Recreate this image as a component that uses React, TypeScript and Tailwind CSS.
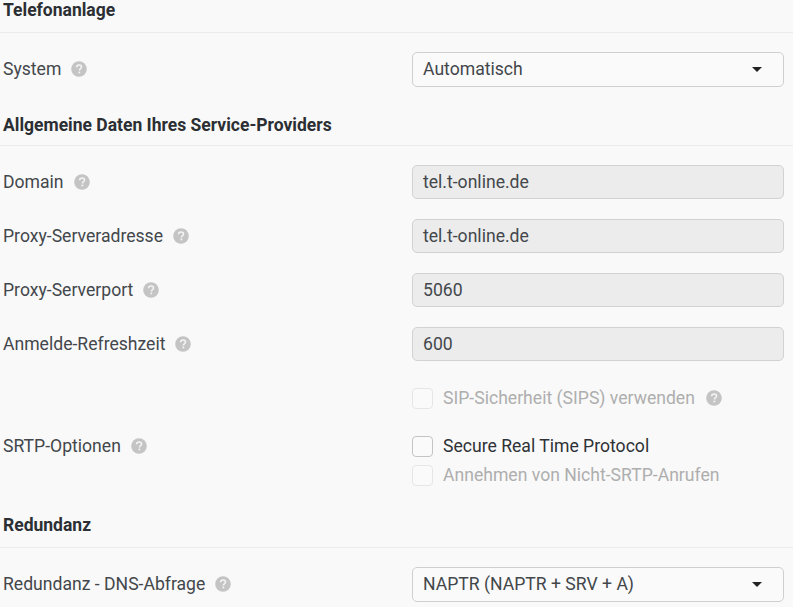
import React from "react";

function Help({ className = "" }: { className?: string }) {
  return (
    <svg viewBox="0 0 16 16" className={`w-4 h-4 shrink-0 ${className}`} aria-hidden="true">
      <circle cx="8" cy="8" r="7.8" fill="#c4c4c4" />
      <path d="M5.6 6.2c.1-1.4 1.1-2.2 2.5-2.2 1.4 0 2.4.8 2.4 2 0 .9-.5 1.4-1.2 1.9-.6.4-.8.7-.8 1.3v.2" fill="none" stroke="#f5f5f5" strokeWidth="1.6" />
      <rect x="7.5" y="10.6" width="1.7" height="1.7" fill="#f5f5f5" />
    </svg>
  );
}

function Heading({ children, className }: { children: React.ReactNode; className: string }) {
  return (
    <div className={`${className} flex items-end pl-[3px] border-b border-[#ececec] font-bold text-[17.5px] leading-5 text-[#2b2f33]`}>
      {children}
    </div>
  );
}

function Label({ text }: { text: string }) {
  return (
    <div className="w-[412px] shrink-0 pl-[3px] flex items-center gap-[10px] h-6">
      <span>{text}</span>
      <Help />
    </div>
  );
}

function Select({ value }: { value: string }) {
  return (
    <div className="w-[372px] h-[35px] flex items-center justify-between pl-[10px] pr-[21px] pb-[1px] bg-[#fafafa] border border-[#cfcfcf] rounded-[5px]">
      <span>{value}</span>
      <span className="w-0 h-0 border-x-[5px] border-x-transparent border-t-[5px] border-t-[#222]" />
    </div>
  );
}

function Field({ label, value }: { label: string; value: string }) {
  return (
    <div className="flex items-center h-[34px] mb-5">
      <Label text={label} />
      <div className="w-[372px] h-[34px] flex items-center pl-[10px] bg-[#ececec] border border-[#d2d2d2] rounded-[5px]">
        {value}
      </div>
    </div>
  );
}

function Check({ text, disabled, help }: { text: string; disabled?: boolean; help?: boolean }) {
  return (
    <div className={`flex items-center gap-[10px] h-6 ${disabled ? "text-[#aeaeae]" : "text-[#2e3236]"}`}>
      <span className={`w-[21px] h-[21px] rounded-[4px] border bg-[#fafafa] ${disabled ? "border-[#e6e6e6]" : "border-[#c4c4c4]"}`} />
      <span>{text}</span>
      {help && <Help className="ml-[1px]" />}
    </div>
  );
}

export default function App() {
  return (
    <div className="w-[793px] h-[607px] overflow-hidden bg-[#f9f9f9] text-[#43474b] text-[17.6px] leading-6" style={{ fontFamily: "Roboto, sans-serif" }}>
      <Heading className="h-[33px] mb-[19px] pb-[12px]">Telefonanlage</Heading>
      <div className="flex items-center h-[35px]">
        <div className="-mt-[2px]"><Label text="System" /></div>
        <Select value="Automatisch" />
      </div>
      <Heading className="h-[59px] mb-[19px] pb-[10px]">Allgemeine Daten Ihres Service-Providers</Heading>
      <Field label="Domain" value="tel.t-online.de" />
      <Field label="Proxy-Serveradresse" value="tel.t-online.de" />
      <Field label="Proxy-Serverport" value="5060" />
      <Field label="Anmelde-Refreshzeit" value="600" />
      <div className="flex items-center h-[24px]">
        <div className="w-[412px] shrink-0" />
        <div className="pt-[10px]">
          <Check text="SIP-Sicherheit (SIPS) verwenden" disabled help />
        </div>
      </div>
      <div className="flex mt-[29px]">
        <Label text="SRTP-Optionen" />
        <div className="flex flex-col gap-[5px]">
          <Check text="Secure Real Time Protocol" />
          <Check text="Annehmen von Nicht-SRTP-Anrufen" disabled />
        </div>
      </div>
      <Heading className="h-[61px] mb-[19px] pb-[12px]">Redundanz</Heading>
      <div className="flex items-center h-[35px]">
        <div className="-mt-[2px]"><Label text="Redundanz - DNS-Abfrage" /></div>
        <Select value="NAPTR (NAPTR + SRV + A)" />
      </div>
    </div>
  );
}
